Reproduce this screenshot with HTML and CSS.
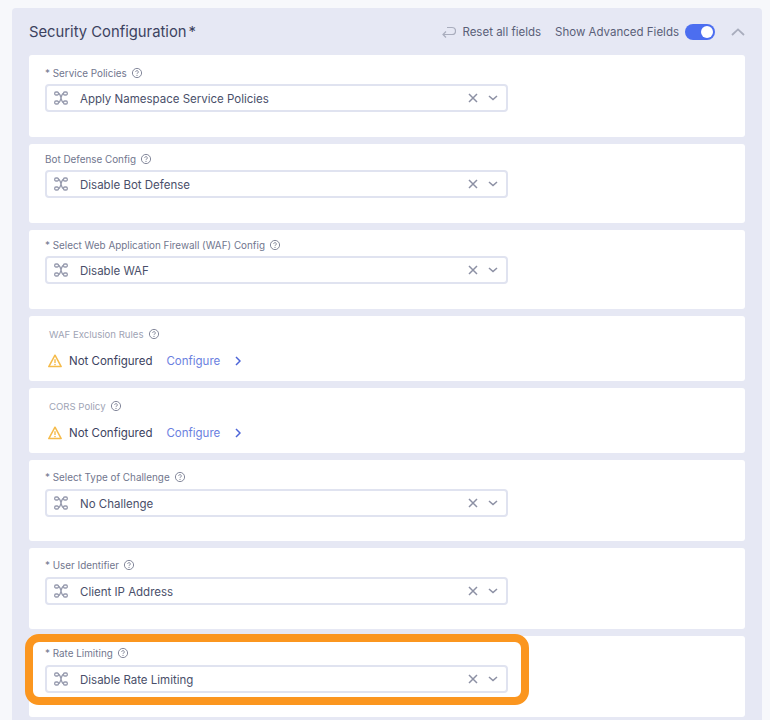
FILE: index.html
```html
<!DOCTYPE html>
<html lang="en">
  <head>
    <meta charset="UTF-8" />
    <title>Security Configuration</title>
    <link rel="stylesheet" href="styles.css">
  </head>
  <body>
    <svg class="sprites" width="0" height="0">
      <symbol id="i-help" viewBox="0 0 12 12">
        <circle cx="6" cy="6" r="4.6" fill="none" stroke="currentColor" stroke-width="1"/>
        <path d="M4.7 4.9a1.3 1.3 0 1 1 2 1.1c-.5.3-.7.5-.7 1" fill="none" stroke="currentColor" stroke-width="1"/>
        <circle cx="6" cy="8.4" r=".6" fill="currentColor"/>
      </symbol>
      <symbol id="i-route" viewBox="0 0 14 14">
        <g fill="none" stroke="currentColor" stroke-width="1.3">
          <rect x=".7" y="1" width="3.8" height="3" rx="1.2"/>
          <rect x=".7" y="10" width="3.8" height="3" rx="1.2"/>
          <rect x="9.5" y="1" width="3.8" height="3" rx="1.2"/>
          <rect x="9.5" y="10" width="3.8" height="3" rx="1.2"/>
          <path d="M4.5 2.5c2.8 0 2.2 9 5 9M4.5 11.5c2.8 0 2.2-9 5-9"/>
        </g>
      </symbol>
      <symbol id="i-x" viewBox="0 0 10 10">
        <path d="M1 1l8 8M9 1l-8 8" fill="none" stroke="currentColor" stroke-width="1.5"/>
      </symbol>
      <symbol id="i-down" viewBox="0 0 10 6">
        <path d="M1 1l4 3.6L9 1" fill="none" stroke="currentColor" stroke-width="1.5"/>
      </symbol>
      <symbol id="i-warn" viewBox="0 0 14 14">
        <path d="M7 1.2L.8 12.6h12.4z" fill="none" stroke="currentColor" stroke-width="1.5" stroke-linejoin="round"/>
        <path d="M7 5.2v3.8" stroke="currentColor" stroke-width="1.4"/>
        <circle cx="7" cy="10.6" r=".8" fill="currentColor"/>
      </symbol>
    </svg>

    <section class="panel">
      <header class="panel-head">
        <h2 class="panel-title">Security Configuration<span class="star">*</span></h2>
        <div class="panel-tools">
          <svg class="reset-icon" viewBox="0 0 14 12" width="14" height="12">
            <path d="M5 1.5h5a3.5 3.5 0 0 1 0 7H1M4 5.5l-3 3 3 3" fill="none" stroke="currentColor" stroke-width="1.2"/>
          </svg>
          <span class="tool-text reset-text">Reset all fields</span>
          <span class="tool-text">Show Advanced Fields</span>
          <span class="toggle"><span class="knob"></span></span>
          <svg class="collapse" viewBox="0 0 14 8" width="14" height="8">
            <path d="M1 7l6-5.6L13 7" fill="none" stroke="currentColor" stroke-width="1.8"/>
          </svg>
        </div>
      </header>

      <div class="cards">
        <div class="card card-82">
          <label class="field-label">* Service Policies <svg class="help"><use href="#i-help"/></svg></label>
          <div class="select">
            <svg class="route"><use href="#i-route"/></svg>
            <span class="value">Apply Namespace Service Policies</span>
            <svg class="clear"><use href="#i-x"/></svg>
            <svg class="arrow"><use href="#i-down"/></svg>
          </div>
        </div>

        <div class="card card-79">
          <label class="field-label">Bot Defense Config <svg class="help"><use href="#i-help"/></svg></label>
          <div class="select">
            <svg class="route"><use href="#i-route"/></svg>
            <span class="value">Disable Bot Defense</span>
            <svg class="clear"><use href="#i-x"/></svg>
            <svg class="arrow"><use href="#i-down"/></svg>
          </div>
        </div>

        <div class="card card-79">
          <label class="field-label">* Select Web Application Firewall (WAF) Config <svg class="help"><use href="#i-help"/></svg></label>
          <div class="select">
            <svg class="route"><use href="#i-route"/></svg>
            <span class="value">Disable WAF</span>
            <svg class="clear"><use href="#i-x"/></svg>
            <svg class="arrow"><use href="#i-down"/></svg>
          </div>
        </div>

        <div class="card card-short">
          <label class="field-label muted">WAF Exclusion Rules <svg class="help"><use href="#i-help"/></svg></label>
          <div class="status">
            <svg class="warn"><use href="#i-warn"/></svg>
            <span class="status-text">Not Configured</span>
            <a class="configure">Configure</a>
            <svg class="go" viewBox="0 0 6 10" width="6" height="10"><path d="M1 1l4 4-4 4" fill="none" stroke="currentColor" stroke-width="1.5"/></svg>
          </div>
        </div>

        <div class="card card-short">
          <label class="field-label muted">CORS Policy <svg class="help"><use href="#i-help"/></svg></label>
          <div class="status">
            <svg class="warn"><use href="#i-warn"/></svg>
            <span class="status-text">Not Configured</span>
            <a class="configure">Configure</a>
            <svg class="go" viewBox="0 0 6 10" width="6" height="10"><path d="M1 1l4 4-4 4" fill="none" stroke="currentColor" stroke-width="1.5"/></svg>
          </div>
        </div>

        <div class="card card-81">
          <label class="field-label">* Select Type of Challenge <svg class="help"><use href="#i-help"/></svg></label>
          <div class="select">
            <svg class="route"><use href="#i-route"/></svg>
            <span class="value">No Challenge</span>
            <svg class="clear"><use href="#i-x"/></svg>
            <svg class="arrow"><use href="#i-down"/></svg>
          </div>
        </div>

        <div class="card card-81">
          <label class="field-label">* User Identifier <svg class="help"><use href="#i-help"/></svg></label>
          <div class="select">
            <svg class="route"><use href="#i-route"/></svg>
            <span class="value">Client IP Address</span>
            <svg class="clear"><use href="#i-x"/></svg>
            <svg class="arrow"><use href="#i-down"/></svg>
          </div>
        </div>

        <div class="card card-81 highlighted">
          <label class="field-label">* Rate Limiting <svg class="help"><use href="#i-help"/></svg></label>
          <div class="select">
            <svg class="route"><use href="#i-route"/></svg>
            <span class="value">Disable Rate Limiting</span>
            <svg class="clear"><use href="#i-x"/></svg>
            <svg class="arrow"><use href="#i-down"/></svg>
          </div>
          <div class="callout"></div>
        </div>
      </div>
    </section>
  </body>
</html>
```

FILE: styles.css
```css
html, body {
  height: 720px;
  overflow: hidden;
}

body {
  margin: 0;
  padding: 8px 8px 0 12px;
  background-color: #f7f8fb;
  font-family: Inter, "Liberation Sans", sans-serif;
  color: #3c4260;
}

.sprites {
  position: absolute;
}

.panel {
  height: 720px;
  padding: 0 17px;
  background-color: #e6e8f4;
  border-radius: 4px 4px 0 0;
}

/* Panel header */
.panel-head {
  display: flex;
  align-items: center;
  justify-content: space-between;
  height: 47px;
}

.panel-title {
  margin: 0;
  font-size: 14.8px;
  font-weight: 400;
  color: #3c4260;
}

.star {
  margin-left: 2px;
}

.panel-tools {
  display: flex;
  align-items: center;
}

.tool-text {
  font-size: 11.5px;
  color: #5a5f78;
}

.reset-icon {
  color: #a9adbd;
  margin-right: 6px;
}

.reset-text {
  margin-right: 14px;
}

.toggle {
  display: flex;
  align-items: center;
  justify-content: flex-end;
  box-sizing: border-box;
  width: 30px;
  height: 16px;
  margin-left: 6px;
  padding-right: 2px;
  background-color: #4c6ef0;
  border-radius: 8px;
}

.knob {
  width: 12px;
  height: 12px;
  background-color: #fff;
  border-radius: 50%;
}

.collapse {
  margin-left: 16px;
  color: #a9adbd;
}

/* Cards */
.cards {
  display: flex;
  flex-direction: column;
  gap: 7px;
}

.card {
  position: relative;
  box-sizing: border-box;
  padding: 11px 16px 0;
  background-color: #fff;
  border-radius: 3px;
}

.card-82 {
  height: 82px;
}

.card-81 {
  height: 81px;
  padding-top: 10px;
}

.card-81 .select {
  margin-top: 5px;
}

.card-79 {
  height: 79px;
  padding-top: 8px;
}

.card-short {
  height: 65px;
  padding: 11px 20px 0;
}

.field-label {
  display: flex;
  align-items: center;
  height: 14px;
  font-size: 9.9px;
  color: #71768e;
}

.field-label.muted {
  font-size: 9.6px;
  color: #a0a4b5;
}

.help {
  width: 12px;
  height: 12px;
  margin-left: 4px;
  color: #85899c;
}

/* Select box */
.select {
  display: flex;
  align-items: center;
  box-sizing: border-box;
  width: 463px;
  height: 28px;
  margin-top: 4px;
  padding: 0 8px 0 7px;
  border: 2px solid #e0e3f0;
  border-radius: 4px;
}

.route {
  width: 14px;
  height: 14px;
  color: #979bae;
}

.value {
  flex: 1;
  margin-left: 12px;
  padding-top: 1px;
  font-size: 11.5px;
  color: #4a4f6a;
}

.clear {
  width: 10px;
  height: 10px;
  color: #8c90a4;
}

.arrow {
  width: 10px;
  height: 6px;
  margin-left: 10px;
  color: #8c90a4;
}

/* Not configured rows */
.status {
  display: flex;
  align-items: center;
  height: 20px;
  margin-top: 10px;
  margin-left: -1px;
}

.warn {
  width: 14px;
  height: 14px;
  color: #f5bb4a;
}

.status-text {
  margin-left: 7px;
  font-size: 11.5px;
  color: #3c4260;
}

.configure {
  margin-left: 14px;
  font-size: 11.5px;
  color: #6b7fe0;
}

.go {
  margin-left: 15px;
  color: #4c64d8;
}

/* Orange callout drawn over the last row */
.callout {
  position: absolute;
  top: -2px;
  left: -4px;
  box-sizing: border-box;
  width: 504px;
  height: 71px;
  border: 8px solid #fb961f;
  border-radius: 14px;
}
```
